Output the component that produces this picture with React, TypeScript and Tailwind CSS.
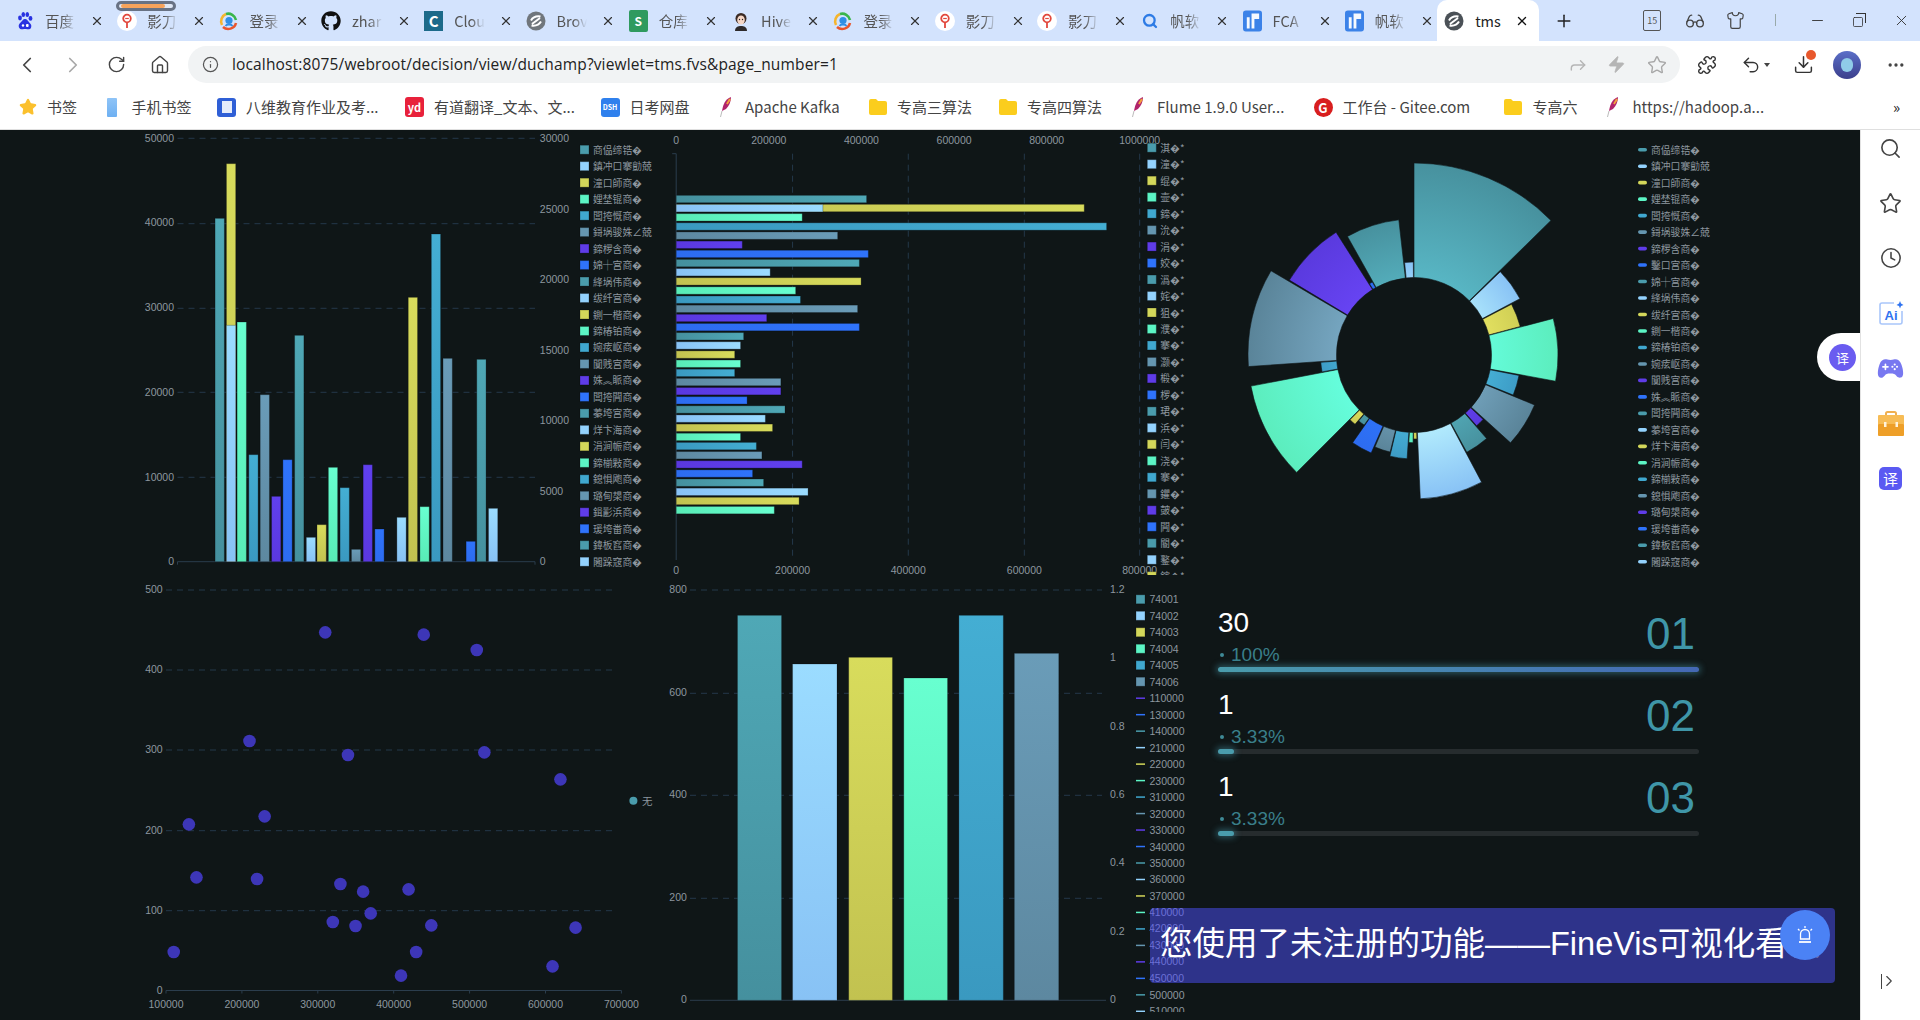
import {
  ChevronLeft, ChevronRight, RotateCw, House, Info, Forward, Zap, Star, Puzzle, Undo2,
  Download, Ellipsis, Search, Clock, Minus, X, Plus, Shirt, Glasses, Square,
} from 'lucide-react';
import { FaGithub } from 'react-icons/fa';
import { IoGameController } from 'react-icons/io5';
import type { ReactNode } from 'react';

const PALETTE = [
  ['#4fa8b6', '#45909e'],
  ['#9bdcff', '#88c2f5'],
  ['#d8dc5c', '#c2c250'],
  ['#68ffd0', '#58ebb6'],
  ['#44aed3', '#3a99c0'],
  ['#6a9cb8', '#5d88a0'],
  ['#6040ee', '#5a38e0'],
  ['#2f73fb', '#2d6cf0'],
];
const SOLID = ['#4a9cac', '#93d2fd', '#d3d75a', '#5cf5c5', '#40a8cf', '#6596b0', '#5f3ce8', '#2f73fb'];
const AXIS = '#2b3d4d';
const GRID = '#24384a';
const LABEL = '#8d979f';
const NUM_FONT = "'Liberation Sans', sans-serif";
const CJK_FONT = "'Noto Sans CJK SC', sans-serif";

const NAMES_A = [
  '商偘缔锆�', '鎮冲口搴勯兢', '潼口師商�', '娌埜锟商�', '闆挎慨商�', '鎶埚骏姝∠兢', '鍗椤含商�', '婂┼宫商�', '綘埚伟商�',
  '绂纤宫商�', '鍘一楷商�', '鍗椿铂商�', '婉痃岖商�', '闃贱宫商�', '姝︽眽商�', '闆挎闁商�', '蓁垮宫商�', '烊卞海商�',
  '涓涧帪商�', '鍗椾敤商�', '鎴惧飑商�', '璐甸槼商�', '鍓彲浜商�', '瑗垮畨商�', '鍏板窞商�', '闂跺窛商�',
];
const NAMES_C = [
  '商偘缔锆�', '鎮冲口搴勯兢', '潼口師商�', '娌埜锟商�', '闆挎慨商�', '鎶埚骏姝∠兢', '鍗椤含商�', '鑿口宫商�', '婂┼宫商�',
  '綘埚伟商�', '绂纤宫商�', '鍘一楷商�', '鍗椿铂商�', '婉痃岖商�', '闃贱宫商�', '姝︽眽商�', '闆挎闁商�', '蓁垮宫商�',
  '烊卞海商�', '涓涧帪商�', '鍗椾敤商�', '鎴惧飑商�', '璐甸槼商�', '瑗垮畨商�', '鍏板窞商�', '闂跺窛商�',
];
const NAMES_B = [
  '淇�*', '潼�*', '绲�*', '壸�*', '鍗�*', '沇�*', '涓�*', '姣�*', '潙�*', '姹�*', '狙�*', '濮�*', '搴�*', '灏�*',
  '椴�*', '椤�*', '珺�*', '浜�*', '闫�*', '浇�*', '搴�*', '鑺�*', '皷�*', '闁�*', '閽�*', '鐜�*', '鎵�*',
];

// bars of the first chart: left edge in zoom units, top in zoom units
const COL_BARS: [number, number, number][] = [
  [247, 280, 0], [280, 601, 1], [311, 591, 3], [345, 989, 4], [378, 809, 5], [411, 1114, 6], [444, 1004, 7],
  [478, 631, 0], [512, 1237, 1], [543, 1199, 2], [576, 1027, 3], [610, 1088, 4], [643, 1273, 5], [677, 1019, 6],
  [711, 1212, 7], [775, 1177, 1], [808, 517, 2], [842, 1145, 3], [875, 327, 4], [909, 700, 5], [976, 1249, 7],
  [1007, 703, 0], [1041, 1150, 1],
];
const ROW_BARS = [
  600, 473, 413, 1297, 516, 239, 605, 579, 320, 584, 394, 408, 574, 310, 579, 243, 234, 217, 234, 217, 351, 351, 253,
  363, 306, 327, 234, 280, 296, 413, 269, 301, 430, 404, 332,
];
// outer radius, start angle, end angle, colour
const ROSE: [number, number, number, number][] = [
  [192, 0, 45.5, 0], [120, 46, 62, 1], [110, 62.5, 75, 2], [144, 75.3, 100.5, 3], [107, 101, 112, 4],
  [130.5, 112.5, 132.3, 5], [94.5, 133, 138.5, 6], [110.7, 139, 151.5, 0], [144, 152, 177.5, 1], [84, 178, 180.3, 2],
  [87.7, 180.6, 183.4, 3], [104, 183.8, 193.4, 4], [100, 193.8, 203, 5], [107, 203.6, 215, 7], [86, 215.4, 220, 0],
  [91, 220.4, 224.7, 2], [166, 225, 259.2, 3], [93.5, 259.6, 265.5, 4], [166, 266, 300.5, 5], [145.4, 301, 327.6, 6],
  [84, 328, 330.3, 7], [136, 330.7, 353.6, 0], [93, 354.2, 359.6, 1],
];
const DOTS = [
  [567, 172], [853, 179], [1007, 225], [347, 498], [633, 540], [1029, 532], [1250, 613], [391, 724], [171, 748],
  [193, 907], [369, 912], [611, 927], [677, 950], [809, 943], [699, 1015], [589, 1041], [655, 1053], [875, 1051],
  [831, 1131], [787, 1202], [1227, 1174], [1294, 1058], [127, 1131],
];
const BIG_BARS = [[225, 353, 121], [385, 514, 267], [548, 675, 247], [708, 835, 309], [868, 997, 121], [1029, 1158, 235]];
const LINE_ITEMS = [
  '110000', '130000', '140000', '210000', '220000', '230000', '310000', '320000', '330000', '340000', '350000', '360000',
  '370000', '410000', '420000', '430000', '440000', '450000', '500000', '510000',
];

const zx = (origin: number, v: number) => origin + v / 2.904;
const zy = (origin: number, v: number) => origin + v / 3;

function Grads({ id, horizontal = false }: { id: string; horizontal?: boolean }) {
  return (
    <defs>
      {PALETTE.map(([a, b], i) => (
        <linearGradient key={i} id={`${id}${i}`} x1="0" y1="0" x2={horizontal ? '1' : '0'} y2={horizontal ? '0' : '1'}>
          <stop offset="0" stopColor={horizontal ? b : a} />
          <stop offset="1" stopColor={horizontal ? a : b} />
        </linearGradient>
      ))}
    </defs>
  );
}

function Num({ x, y, anchor = 'start', children }: { x: number; y: number; anchor?: 'start' | 'middle' | 'end'; children: ReactNode }) {
  return (
    <text x={x} y={y} textAnchor={anchor} dominantBaseline="central" fontSize={10.5} fill={LABEL} fontFamily={NUM_FONT}>
      {children}
    </text>
  );
}

function Legend({ names, x, y }: { names: string[]; x: number; y: number }) {
  return (
    <>
      {names.map((n, i) => (
        <g key={i}>
          <rect x={x} y={y + i * 16.48 - 4.5} width={9} height={9} fill={SOLID[i % 8]} stroke="#000" strokeOpacity={0.25} />
          <text x={x + 13} y={y + i * 16.48} dominantBaseline="central" fontSize={9.8} fill={LABEL} fontFamily={CJK_FONT}>
            {n}
          </text>
        </g>
      ))}
    </>
  );
}

function ColumnChart() {
  const left = 177.5;
  const right = 535;
  const ticks = [50000, 40000, 30000, 20000, 10000];
  const ys = [138.3, 223.7, 308.3, 392.3, 477.3];
  const labelYs = [138.3, 222, 307, 392.3, 477.3];
  const base = 561.7;
  return (
    <svg viewBox="0 130 660 445" className="w-[660px] h-[445px] block">
      <Grads id="c" />
      {ys.map((y, i) => (
        <g key={i}>
          <line x1={left} x2={right} y1={y} y2={y} stroke={GRID} strokeDasharray="6 5" />
          <Num x={174} y={labelYs[i]} anchor="end">{ticks[i]}</Num>
        </g>
      ))}
      <Num x={174} y={base - 1} anchor="end">0</Num>
      <line x1={left} x2={right} y1={base} y2={base} stroke={AXIS} />
      <line x1={left} x2={left} y1={base} y2={base + 3} stroke={AXIS} />
      <line x1={right} x2={right} y1={base} y2={base + 3} stroke={AXIS} />
      {[30000, 25000, 20000, 15000, 10000, 5000].map((t, i) => (
        <Num key={t} x={539.8} y={138.3 + i * 70.5}>{t}</Num>
      ))}
      <Num x={539.8} y={base - 1}>0</Num>
      <rect x={zx(130, 280)} y={zy(125, 116)} width={9.3} height={base - zy(125, 116)} fill="url(#c2)" stroke="#000" strokeOpacity={0.25} />
      {COL_BARS.map(([l, t, c], i) => (
        <rect key={i} x={zx(130, l)} y={zy(125, t)} width={9.3} height={base - zy(125, t)} fill={`url(#c${c})`} stroke="#000" strokeOpacity={0.25} />
      ))}
      <Legend names={NAMES_A} x={580} y={149.7} />
    </svg>
  );
}

function BarChart() {
  const x0 = 676.2;
  const topLabels = [['0', 47], ['200000', 316], ['400000', 585], ['600000', 854], ['800000', 1123], ['1000000', 1393]] as const;
  const bottomLabels = [['0', 47], ['200000', 385], ['400000', 721], ['600000', 1058], ['800000', 1393]] as const;
  return (
    <svg viewBox="660 130 530 445" className="w-[530px] h-[445px] block">
      <Grads id="b" horizontal />
      {[385, 721, 1058, 1393].map((v) => (
        <line key={v} x1={zx(660, v)} x2={zx(660, v)} y1={153.7} y2={560} stroke={GRID} strokeDasharray="6 5" />
      ))}
      <path d={`M${x0 - 4} 153.7H${x0}V560`} fill="none" stroke={AXIS} />
      {topLabels.map(([t, v]) => (
        <Num key={t} x={zx(660, v)} y={140} anchor="middle">{t}</Num>
      ))}
      {bottomLabels.map(([t, v]) => (
        <Num key={t} x={zx(660, v)} y={570} anchor="middle">{t}</Num>
      ))}
      <rect x={x0} y={zy(125, 238)} width={zx(660, 1232) - x0} height={7.4} fill="url(#b2)" stroke="#000" strokeOpacity={0.25} />
      {ROW_BARS.map((r, i) => (
        <rect
          key={i}
          x={x0}
          y={zy(125, 211 + i * 27.45)}
          width={zx(660, r) - x0}
          height={7.4}
          fill={`url(#b${i < 2 ? i : (i + 1) % 8})`}
          stroke="#000"
          strokeOpacity={0.25}
        />
      ))}
      <Legend names={NAMES_B} x={1147.3} y={147.7} />
    </svg>
  );
}

function sector(cx: number, cy: number, r0: number, r1: number, a0: number, a1: number) {
  const pt = (r: number, a: number) => {
    const rad = (a * Math.PI) / 180;
    return `${(cx + r * Math.sin(rad)).toFixed(2)} ${(cy - r * Math.cos(rad)).toFixed(2)}`;
  };
  return `M${pt(r0, a0)}L${pt(r1, a0)}A${r1} ${r1} 0 0 1 ${pt(r1, a1)}L${pt(r0, a1)}A${r0} ${r0} 0 0 0 ${pt(r0, a0)}Z`;
}

const ROSE_STOPS = [
  ['#58b6c4', '#47919e'], ['#bdf6ff', '#88c2f5'], ['#f3f06a', '#d0cf55'], ['#66ffe0', '#5cedbd'],
  ['#4fc2e3', '#3d9cc6'], ['#78a9c4', '#5a8499'], ['#6a46f8', '#5a3ade'], ['#2f78ff', '#2d6cf0'],
];

function RoseChart() {
  const cx = 1414;
  const cy = 355;
  return (
    <svg viewBox="1190 130 670 445" className="w-[670px] h-[445px] block">
      <defs>
        {ROSE.map(([r, , , c], i) => (
          <radialGradient key={i} id={`r${i}`} gradientUnits="userSpaceOnUse" cx={cx} cy={cy} r={r} fx={cx} fy={cy}>
            <stop offset="0.4" stopColor={ROSE_STOPS[c][0]} />
            <stop offset="1" stopColor={ROSE_STOPS[c][1]} />
          </radialGradient>
        ))}
      </defs>
      {ROSE.map(([r, a0, a1], i) => (
        <path key={i} d={sector(cx, cy, 77.5, r, a0, a1)} fill={`url(#r${i})`} stroke="#0f1617" strokeWidth={0.6} />
      ))}
      {NAMES_C.map((n, i) => (
        <g key={i}>
          <rect x={1638} y={149.7 + i * 16.48 - 1.8} width={9} height={3.6} rx={1.8} fill={SOLID[i % 8]} />
          <text x={1651} y={149.7 + i * 16.48} dominantBaseline="central" fontSize={9.8} fill={LABEL} fontFamily={CJK_FONT}>
            {n}
          </text>
        </g>
      ))}
    </svg>
  );
}

function ScatterChart() {
  const left = 166;
  const right = 621.4;
  const ys = [590, 670, 750, 830.7, 910.7];
  const ticks = [500, 400, 300, 200, 100];
  return (
    <svg viewBox="0 575 660 445" className="w-[660px] h-[445px] block">
      {ys.map((y, i) => (
        <g key={i}>
          <line x1={left} x2={right - 5} y1={y} y2={y} stroke={GRID} strokeDasharray="6 5" />
          <Num x={162.7} y={y - 1} anchor="end">{ticks[i]}</Num>
        </g>
      ))}
      <Num x={162.7} y={990} anchor="end">0</Num>
      <line x1={left} x2={right} y1={990.5} y2={990.5} stroke={AXIS} />
      {[0, 1, 2, 3, 4, 5, 6].map((i) => (
        <g key={i}>
          <line x1={left + i * 75.9} x2={left + i * 75.9} y1={990.5} y2={993.5} stroke={AXIS} />
          <Num x={left + i * 75.9} y={1004} anchor="middle">{100000 * (i + 1)}</Num>
        </g>
      ))}
      {DOTS.map(([x, y], i) => (
        <circle key={i} cx={zx(130, x)} cy={zy(575, y)} r={6.3} fill="#3d36b8" />
      ))}
      <circle cx={633.4} cy={800.7} r={4} fill={SOLID[0]} />
      <text x={642} y={800.7} dominantBaseline="central" fontSize={10.5} fill={LABEL} fontFamily={CJK_FONT}>无</text>
    </svg>
  );
}

function ColumnBigChart() {
  const left = 690;
  const right = 1106;
  const base = 1000.3;
  const ys = [590, 693.3, 795.3, 898.3];
  const ticks = [800, 600, 400, 200];
  return (
    <svg viewBox="660 575 530 445" className="w-[530px] h-[445px] block">
      <Grads id="g" />
      <defs>
        <clipPath id="legendClip">
          <rect x={1130} y={575} width={60} height={437} />
        </clipPath>
      </defs>
      {ys.map((y, i) => (
        <g key={i}>
          <line x1={left} x2={right - 4} y1={y} y2={y} stroke={GRID} strokeDasharray="6 5" />
          <Num x={686.9} y={y - 1} anchor="end">{ticks[i]}</Num>
        </g>
      ))}
      <Num x={686.9} y={999} anchor="end">0</Num>
      <line x1={left} x2={right} y1={base} y2={base} stroke={AXIS} />
      {['1.2', '1', '0.8', '0.6', '0.4', '0.2', '0'].map((t, i) => (
        <Num key={t} x={1110} y={589 + i * 68.3}>{t}</Num>
      ))}
      {BIG_BARS.map(([l, r, t], i) => (
        <rect
          key={i}
          x={zx(660, l)}
          y={zy(575, t)}
          width={(r - l) / 2.904}
          height={base - zy(575, t)}
          fill={`url(#g${i})`}
          stroke="#000"
          strokeOpacity={0.2}
        />
      ))}
      <g clipPath="url(#legendClip)">
        {['74001', '74002', '74003', '74004', '74005', '74006'].map((n, i) => (
          <g key={n}>
            <rect x={1136} y={599.3 + i * 16.48 - 4.5} width={9} height={9} fill={SOLID[i]} stroke="#000" strokeOpacity={0.25} />
            <Num x={1149.5} y={599.3 + i * 16.48}>{n}</Num>
          </g>
        ))}
        {LINE_ITEMS.map((n, i) => (
          <g key={n}>
            <line x1={1136} x2={1145} y1={698.2 + i * 16.48} y2={698.2 + i * 16.48} stroke={SOLID[(i + 6) % 8]} strokeWidth={1.5} />
            <Num x={1149.5} y={698.2 + i * 16.48}>{n}</Num>
          </g>
        ))}
      </g>
    </svg>
  );
}

function ProgressRow({ value, percent, order, full }: { value: string; percent: string; order: string; full?: boolean }) {
  return (
    <div className="h-[82px] flex flex-col justify-end">
      <div className="flex justify-between items-start pr-[4px]">
        <div>
          <div className="text-[28px] leading-[32px] text-white">{value}</div>
          <div className="mt-[4px] h-[24px] flex items-center text-[19px] leading-[24px] text-[#3a7f8a]">
            <span className="ml-[2px] mr-[7px] w-[4px] h-[4px] rounded-full bg-[#3f8a96]" />
            {percent}
          </div>
        </div>
        <div className="mt-[5px] text-[44px] leading-[44px] text-[#3f96a8]">{order}</div>
      </div>
      <div className="h-[5px] rounded-full bg-[#262c2e]">
        {full ? (
          <div className="h-full w-full rounded-full bg-gradient-to-r from-[#4a9cac] to-[#4468b4] shadow-[0_0_6px_2px_rgba(74,156,172,0.45)]" />
        ) : (
          <div className="h-full w-[16px] rounded-full bg-[#4a9cac] shadow-[0_0_6px_2px_rgba(74,156,172,0.45)]" />
        )}
      </div>
    </div>
  );
}

function ProgressPanel() {
  return (
    <div className="pt-[15px] pl-[28px] w-[509px] [font-family:'Liberation_Sans',sans-serif]">
      <ProgressRow value="30" percent="100%" order="01" full />
      <ProgressRow value="1" percent="3.33%" order="02" />
      <ProgressRow value="1" percent="3.33%" order="03" />
    </div>
  );
}

/* favicons */
const Baidu = () => (
  <svg viewBox="0 0 20 20" className="w-[20px] h-[20px]">
    <g fill="#2932e1">
      <ellipse cx="5" cy="7" rx="1.9" ry="2.4" />
      <ellipse cx="8.3" cy="3.6" rx="1.8" ry="2.5" />
      <ellipse cx="12.3" cy="3.6" rx="1.8" ry="2.5" />
      <ellipse cx="15.5" cy="7.4" rx="1.9" ry="2.4" />
      <path d="M10 8c-2 0-2.8 2-4.2 3.2C4 12.8 3.2 14.5 4 16.5c.7 1.7 2.6 2 4 1.7 1.3-.3 2.8-.3 4.1 0 1.5.3 3.4 0 4-1.8.7-2-.1-3.5-1.8-5C12.9 10.1 12.1 8 10 8z" />
    </g>
    <circle cx="8" cy="14.5" r="1.2" fill="#fff" />
    <rect x="11" y="13" width="2.6" height="3" rx="1" fill="#fff" />
  </svg>
);
const Pin = () => (
  <svg viewBox="0 0 20 20" className="w-[20px] h-[20px]">
    <circle cx="10" cy="10" r="10" fill="#fff" />
    <circle cx="10" cy="7.5" r="3.8" fill="none" stroke="#e2483d" strokeWidth="1.8" />
    <path d="M10 11.5V17" stroke="#e2483d" strokeWidth="1.8" />
    <path d="M8.2 7.5h3.6" stroke="#e2483d" strokeWidth="1.2" />
  </svg>
);
const LoginRing = () => (
  <svg viewBox="0 0 20 20" className="w-[20px] h-[20px]" fill="none" strokeWidth="2.6">
    <path d="M3 14A8 8 0 0 1 7 3" stroke="#f5b52e" />
    <path d="M7 3a8 8 0 0 1 10 6" stroke="#39b54a" />
    <path d="M17 12a8 8 0 0 1-13 4" stroke="#e8552d" />
    <circle cx="10" cy="9.5" r="3.6" fill="#2f8fe6" stroke="none" />
    <path d="M6.5 15c1-2 6-2 7 0" stroke="#2f8fe6" strokeWidth="1.8" />
  </svg>
);
const Github = () => <FaGithub className="w-[20px] h-[20px] text-[#111]" />;
const CloudC = () => (
  <div className="w-[19px] h-[20px] bg-[#1c6a8a] flex items-center justify-center text-white text-[15px] font-bold leading-none">C</div>
);
const Brow = ({ dark = false }: { dark?: boolean }) => (
  <svg viewBox="0 0 20 20" className="w-[20px] h-[20px]">
    <circle cx="10" cy="10" r="9.5" fill={dark ? '#4b5157' : '#70767c'} />
    <path d="M5 9.5c2-3.5 6-4.5 9.5-4M15 10.5c-2 3.5-6 4.5-9.5 4M6 13l8-6" stroke="#fff" strokeWidth="2" fill="none" />
  </svg>
);
const Sheet = () => (
  <div className="w-[19px] h-[22px] rounded-[2px] bg-[#2f9a5f] flex items-center justify-center text-white text-[12px] font-bold leading-none">S</div>
);
const HiveFace = () => (
  <svg viewBox="0 0 20 20" className="w-[20px] h-[20px]">
    <path d="M4 20c0-4 3-5 6-5s6 1 6 5z" fill="#2e2a2a" />
    <circle cx="10" cy="7.5" r="5.5" fill="#3a2a24" />
    <ellipse cx="10" cy="9" rx="3.8" ry="4.6" fill="#f6d7c6" />
    <circle cx="8.5" cy="8.5" r=".7" fill="#222" />
    <circle cx="11.5" cy="8.5" r=".7" fill="#222" />
  </svg>
);
const FLogo = () => (
  <svg viewBox="0 0 20 22" className="w-[19px] h-[22px]">
    <rect width="20" height="22" rx="3" fill="#3b82e8" />
    <path d="M9 3h8v6H12v10H9z M4 7h3v12H4z" fill="#fff" opacity=".95" />
  </svg>
);
const BlueSearch = () => <Search className="w-[16px] h-[16px] text-[#2d7be5]" strokeWidth={3.4} />;

const TABS: [string, ReactNode][] = [
  ['百度', <Baidu />],
  ['影刀', <Pin />],
  ['登录', <LoginRing />],
  ['zhar', <Github />],
  ['Clou', <CloudC />],
  ['Brov', <Brow />],
  ['仓库', <Sheet />],
  ['Hive', <HiveFace />],
  ['登录', <LoginRing />],
  ['影刀', <Pin />],
  ['影刀', <Pin />],
  ['帆软', <BlueSearch />],
  ['FCA', <FLogo />],
  ['帆软', <FLogo />],
];

function Tab({ label, icon }: { label: string; icon: ReactNode }) {
  return (
    <div className="w-[102.3px] shrink-0 flex items-center h-full text-[14.5px] text-[#555]">
      <div className="ml-[6px] w-[21px] flex items-center justify-center shrink-0">{icon}</div>
      <div className="ml-[10px] w-[31px] overflow-hidden whitespace-nowrap [mask-image:linear-gradient(to_right,black_55%,transparent)]">{label}</div>
      <X className="ml-[14px] w-[14px] h-[14px] text-[#333] shrink-0" strokeWidth={2} />
    </div>
  );
}

function TabBar() {
  return (
    <div className="relative h-[41px] bg-[#d3e3fd] flex items-stretch pl-[8px]">
      {TABS.map(([l, i], n) => (
        <Tab key={n} label={l} icon={i} />
      ))}
      <div className="-ml-[3px] w-[102px] shrink-0 bg-white rounded-t-[10px] flex items-center text-[14.5px] text-[#222]">
        <div className="ml-[6px] w-[21px] flex items-center justify-center">
          <Brow dark />
        </div>
        <div className="ml-[11px] w-[30px]">tms</div>
        <X className="ml-[10px] w-[14px] h-[14px] text-[#111]" strokeWidth={2.4} />
      </div>
      <Plus className="ml-[15px] mt-[11px] w-[20px] h-[20px] text-[#222]" strokeWidth={1.8} />
      <div className="ml-[69px] mt-[10px] w-[18px] h-[21px] border border-[#555] rounded-[2px] text-[9px] leading-[19px] text-center text-[#555]">15</div>
      <Glasses className="ml-[24px] mt-[11px] w-[20px] h-[20px] text-[#444]" strokeWidth={1.6} />
      <Shirt className="ml-[21px] mt-[11px] w-[19px] h-[19px] text-[#444]" strokeWidth={1.5} />
      <div className="ml-[30px] mt-[14px] w-px h-[12px] bg-[#9aa]" />
      <Minus className="ml-[33px] mt-[12px] w-[17px] h-[17px] text-[#333]" strokeWidth={1.3} />
      <div className="relative ml-[26px] mt-[13px] w-[14px] h-[15px]">
        <Square className="absolute left-0 bottom-0 w-[12px] h-[12px] text-[#333]" strokeWidth={1.6} />
        <div className="absolute right-0 top-0 w-[10px] h-[10px] border-t border-r border-[#333]" />
      </div>
      <X className="ml-[27px] mt-[12px] w-[17px] h-[17px] text-[#333]" strokeWidth={1.3} />
      {/* tab drag preview */}
      <div className="absolute left-[116px] top-[1px] w-[60px] h-[10px] rounded-[5px] border-[3px] border-[#687284] bg-[#dfe7f5] overflow-hidden">
        <div className="w-[44px] h-full bg-[#f7a35c] rounded-[2px] ml-[2px]" />
      </div>
    </div>
  );
}

function AddressBar() {
  return (
    <div className="h-[47px] bg-white flex items-center text-[#444]">
      <ChevronLeft className="ml-[14px] w-[26px] h-[26px] text-[#444]" strokeWidth={1.6} />
      <ChevronRight className="ml-[20px] w-[26px] h-[26px] text-[#a8a8a8]" strokeWidth={1.6} />
      <RotateCw className="ml-[21px] w-[19px] h-[19px] text-[#444]" strokeWidth={1.8} />
      <House className="ml-[24px] w-[20px] h-[20px] text-[#444]" strokeWidth={1.7} />
      <div className="ml-[18px] w-[1492px] h-[37px] rounded-full bg-[#f1f3f4] flex items-center shrink-0">
        <Info className="ml-[14px] w-[17px] h-[17px] text-[#555]" strokeWidth={1.7} />
        <div className="ml-[13px] w-[1334px] shrink-0 text-[15.5px] text-[#222] [font-family:'Open_Sans',sans-serif] tracking-[0.15px]">
          localhost:8075/webroot/decision/view/duchamp?viewlet=tms.fvs&amp;page_number=1
        </div>
        <Forward className="ml-[2px] w-[20px] h-[20px] text-[#b5b5b5]" strokeWidth={1.7} />
        <Zap className="ml-[19px] w-[19px] h-[19px] text-[#b5b5b5] fill-[#b5b5b5]" strokeWidth={1} />
        <Star className="ml-[21px] w-[20px] h-[20px] text-[#a8a8a8]" strokeWidth={1.7} />
      </div>
      <Puzzle className="ml-[17px] w-[20px] h-[20px] text-[#333]" strokeWidth={1.7} />
      <Undo2 className="ml-[24px] w-[20px] h-[20px] text-[#333]" strokeWidth={1.7} />
      <div className="ml-[3px] w-0 h-0 border-x-[3px] border-x-transparent border-t-[4px] border-t-[#444]" />
      <div className="relative ml-[23px]">
        <Download className="w-[21px] h-[21px] text-[#333]" strokeWidth={1.7} />
        <div className="absolute -right-[2px] -top-[4px] w-[10px] h-[10px] rounded-full bg-[#e8582c]" />
      </div>
      <div className="ml-[19px] w-[28px] h-[28px] rounded-full bg-gradient-to-b from-[#5b6fc8] to-[#3b3f8c] overflow-hidden flex items-center justify-center">
        <div className="w-[12px] h-[14px] rounded-full bg-[#8fcbe8]" />
      </div>
      <Ellipsis className="ml-[25px] w-[20px] h-[20px] text-[#444]" strokeWidth={2} />
    </div>
  );
}

const Folder = () => (
  <svg viewBox="0 0 18 16" className="w-[18px] h-[16px]">
    <path d="M0 2a2 2 0 0 1 2-2h5l2 2h7a2 2 0 0 1 2 2v10a2 2 0 0 1-2 2H2a2 2 0 0 1-2-2z" fill="#fbcd1d" />
  </svg>
);
const Feather = () => (
  <svg viewBox="0 0 14 22" className="w-[14px] h-[22px]">
    <path d="M12 1C6 3 4 9 3 15l4-2c3-3 5-7 5-12z" fill="#b0246b" />
    <path d="M11 3C10 5 9 6 8 8" stroke="#f2a03c" strokeWidth="2" fill="none" />
    <path d="M3 15 1.5 21" stroke="#bbb" strokeWidth="1" />
  </svg>
);

const MARKS: { label: string; icon: ReactNode; w: string }[] = [
  { label: '书签', icon: <Star className="w-[18px] h-[18px] text-[#fbc02d] fill-[#fbc02d]" />, w: 'w-[84.5px]' },
  { label: '手机书签', icon: <div className="w-[10px] h-[19px] rounded-[1px] bg-gradient-to-b from-[#8fc4f7] to-[#6eb0f2]" />, w: 'w-[114.5px]' },
  { label: '八维教育作业及考...', icon: <div className="w-[19px] h-[19px] rounded-[3px] bg-[#2f5fd6] flex items-center justify-center"><div className="w-[10px] h-[12px] bg-[#e5ecfb]" /></div>, w: 'w-[188px]' },
  { label: '有道翻译_文本、文...', icon: <div className="w-[19px] h-[20px] rounded-[3px] bg-[#e8213b] text-white text-[11px] leading-[20px] font-bold text-center">yd</div>, w: 'w-[195.5px]' },
  { label: '日考网盘', icon: <div className="w-[19px] h-[19px] rounded-[3px] bg-[#2f80ed] text-white text-[7px] leading-[19px] font-bold text-center">DSH</div>, w: 'w-[115.5px]' },
  { label: 'Apache Kafka', icon: <Feather />, w: 'w-[152px]' },
  { label: '专高三算法', icon: <Folder />, w: 'w-[130px]' },
  { label: '专高四算法', icon: <Folder />, w: 'w-[130px]' },
  { label: 'Flume 1.9.0 User...', icon: <Feather />, w: 'w-[185.5px]' },
  { label: '工作台 - Gitee.com', icon: <div className="w-[19px] h-[19px] rounded-full bg-[#d81e1e] text-white text-[13px] leading-[19px] font-bold text-center">G</div>, w: 'w-[190px]' },
  { label: '专高六', icon: <Folder />, w: 'w-[100px]' },
  { label: 'https://hadoop.a...', icon: <Feather />, w: 'w-[180px]' },
];

function BookmarkBar() {
  return (
    <div className="h-[42px] pb-[3px] bg-white border-b border-[#dfdfdf] flex items-center pl-[17.5px] text-[15px] text-[#444]">
      {MARKS.map((m) => (
        <div key={m.label} className={`${m.w} shrink-0 flex items-center`}>
          <div className="w-[20px] flex justify-center shrink-0">{m.icon}</div>
          <div className="ml-[9.5px] whitespace-nowrap">{m.label}</div>
        </div>
      ))}
      <div className="ml-[110px] text-[15px] text-[#222]">»</div>
    </div>
  );
}

const SIDE_ITEM = 'h-[36px] mb-[19px] flex items-center justify-center';

function SideBar() {
  return (
    <div className="w-[60px] bg-white border-l border-[#e2e2e2] relative flex flex-col items-center">
      <div className={SIDE_ITEM}><Search className="w-[23px] h-[23px] text-[#444]" strokeWidth={1.7} /></div>
      <div className={SIDE_ITEM}><Star className="w-[23px] h-[23px] text-[#444]" strokeWidth={1.7} /></div>
      <div className={SIDE_ITEM}><Clock className="w-[22px] h-[22px] text-[#444]" strokeWidth={1.7} /></div>
      <div className={SIDE_ITEM}>
        <svg viewBox="0 0 26 26" className="w-[26px] h-[26px]">
          <path d="M16 3H4a2 2 0 0 0-2 2v17a2 2 0 0 0 2 2h18a2 2 0 0 0 2-2V11" fill="none" stroke="#a9c6fa" strokeWidth="1.6" />
          <path d="M22 1l1 2.5L25.5 5 23 6l-1 2.5L21 6l-2.5-1L21 3.5z" fill="#2f73f0" />
          <text x="13" y="19.5" textAnchor="middle" fontSize="13" fontWeight="700" fill="#2f73f0" fontFamily={NUM_FONT}>Ai</text>
        </svg>
      </div>
      <div className={SIDE_ITEM}><IoGameController className="w-[27px] h-[27px] text-[#7878f0]" /></div>
      <div className={SIDE_ITEM}>
        <svg viewBox="0 0 26 25" className="w-[26px] h-[25px]">
          <path d="M8 5V2.5A1.5 1.5 0 0 1 9.5 1h7A1.5 1.5 0 0 1 18 2.5V5" fill="none" stroke="#f0b050" strokeWidth="2" />
          <rect y="4" width="26" height="10" rx="1" fill="#f7bc55" />
          <rect y="13" width="26" height="12" rx="1" fill="#ee9f28" />
          <rect x="6" y="11" width="2.5" height="5" fill="#fff4dc" />
          <rect x="17.5" y="11" width="2.5" height="5" fill="#fff4dc" />
        </svg>
      </div>
      <div className={SIDE_ITEM}>
        <div className="w-[23px] h-[23px] rounded-[5px] bg-[#5a5af2] text-white text-[15px] leading-[23px] text-center">译</div>
      </div>
      <div className="absolute left-[20px] top-[842px] flex items-center text-[#444]">
        <div className="w-px h-[15px] bg-[#444]" />
        <ChevronRight className="w-[18px] h-[18px] -ml-[2px]" strokeWidth={1.5} />
      </div>
    </div>
  );
}

function SirenIcon() {
  return (
    <svg viewBox="0 0 20 20" className="w-[20px] h-[20px]" fill="none" stroke="#fff" strokeWidth="1.3">
      <path d="M5.5 14V9a4.5 4.5 0 0 1 9 0v5z" />
      <path d="M4 17h12" strokeWidth="1.8" />
      <path d="M10 1v2M3 4l1.5 1.5M17 4l-1.5 1.5" />
    </svg>
  );
}

export default function App() {
  return (
    <div className="relative w-[1920px] h-[1020px] overflow-hidden flex flex-col bg-white [font-family:'Noto_Sans_CJK_SC',sans-serif]">
      <TabBar />
      <AddressBar />
      <BookmarkBar />
      <div className="flex-1 flex min-h-0">
        <div className="w-[1860px] bg-[#0f1617] grid grid-cols-[660px_530px_670px] grid-rows-[445px_445px]">
          <ColumnChart />
          <BarChart />
          <RoseChart />
          <ScatterChart />
          <ColumnBigChart />
          <ProgressPanel />
        </div>
        <SideBar />
      </div>

      {/* floating translate pill */}
      <div className="absolute left-[1817px] top-[333px] w-[43px] h-[48px] bg-white rounded-l-full flex items-center pl-[12px]">
        <div className="w-[27px] h-[27px] rounded-full bg-[#6a5cf0] text-white text-[13px] leading-[27px] text-center">译</div>
      </div>

      {/* unregistered banner */}
      <div className="absolute left-[1150px] top-[908px] w-[685px] h-[75px] rounded-[4px] bg-[#2e338a] overflow-hidden">
        <div className="absolute -left-[1px] top-[-4.2px] flex flex-col text-[10.5px] text-[#6b70d6] [font-family:'Liberation_Sans',sans-serif]">
          {['410000', '420000', '430000', '440000', '450000'].map((t) => (
            <div key={t} className="h-[16.48px] leading-[16.48px]">{t}</div>
          ))}
        </div>
        <div className="relative h-full pb-[3px] flex items-center pl-[10px] whitespace-nowrap text-[32.5px] text-white [font-family:'Liberation_Sans','Noto_Sans_CJK_SC',sans-serif]">
          您使用了未注册的功能——FineVis可视化看<span className="text-white/30">板</span>
        </div>
      </div>
      <div className="absolute left-[1780px] top-[910px] w-[50px] h-[50px] rounded-full bg-[#4b82f5] flex items-center justify-center">
        <SirenIcon />
      </div>
    </div>
  );
}
